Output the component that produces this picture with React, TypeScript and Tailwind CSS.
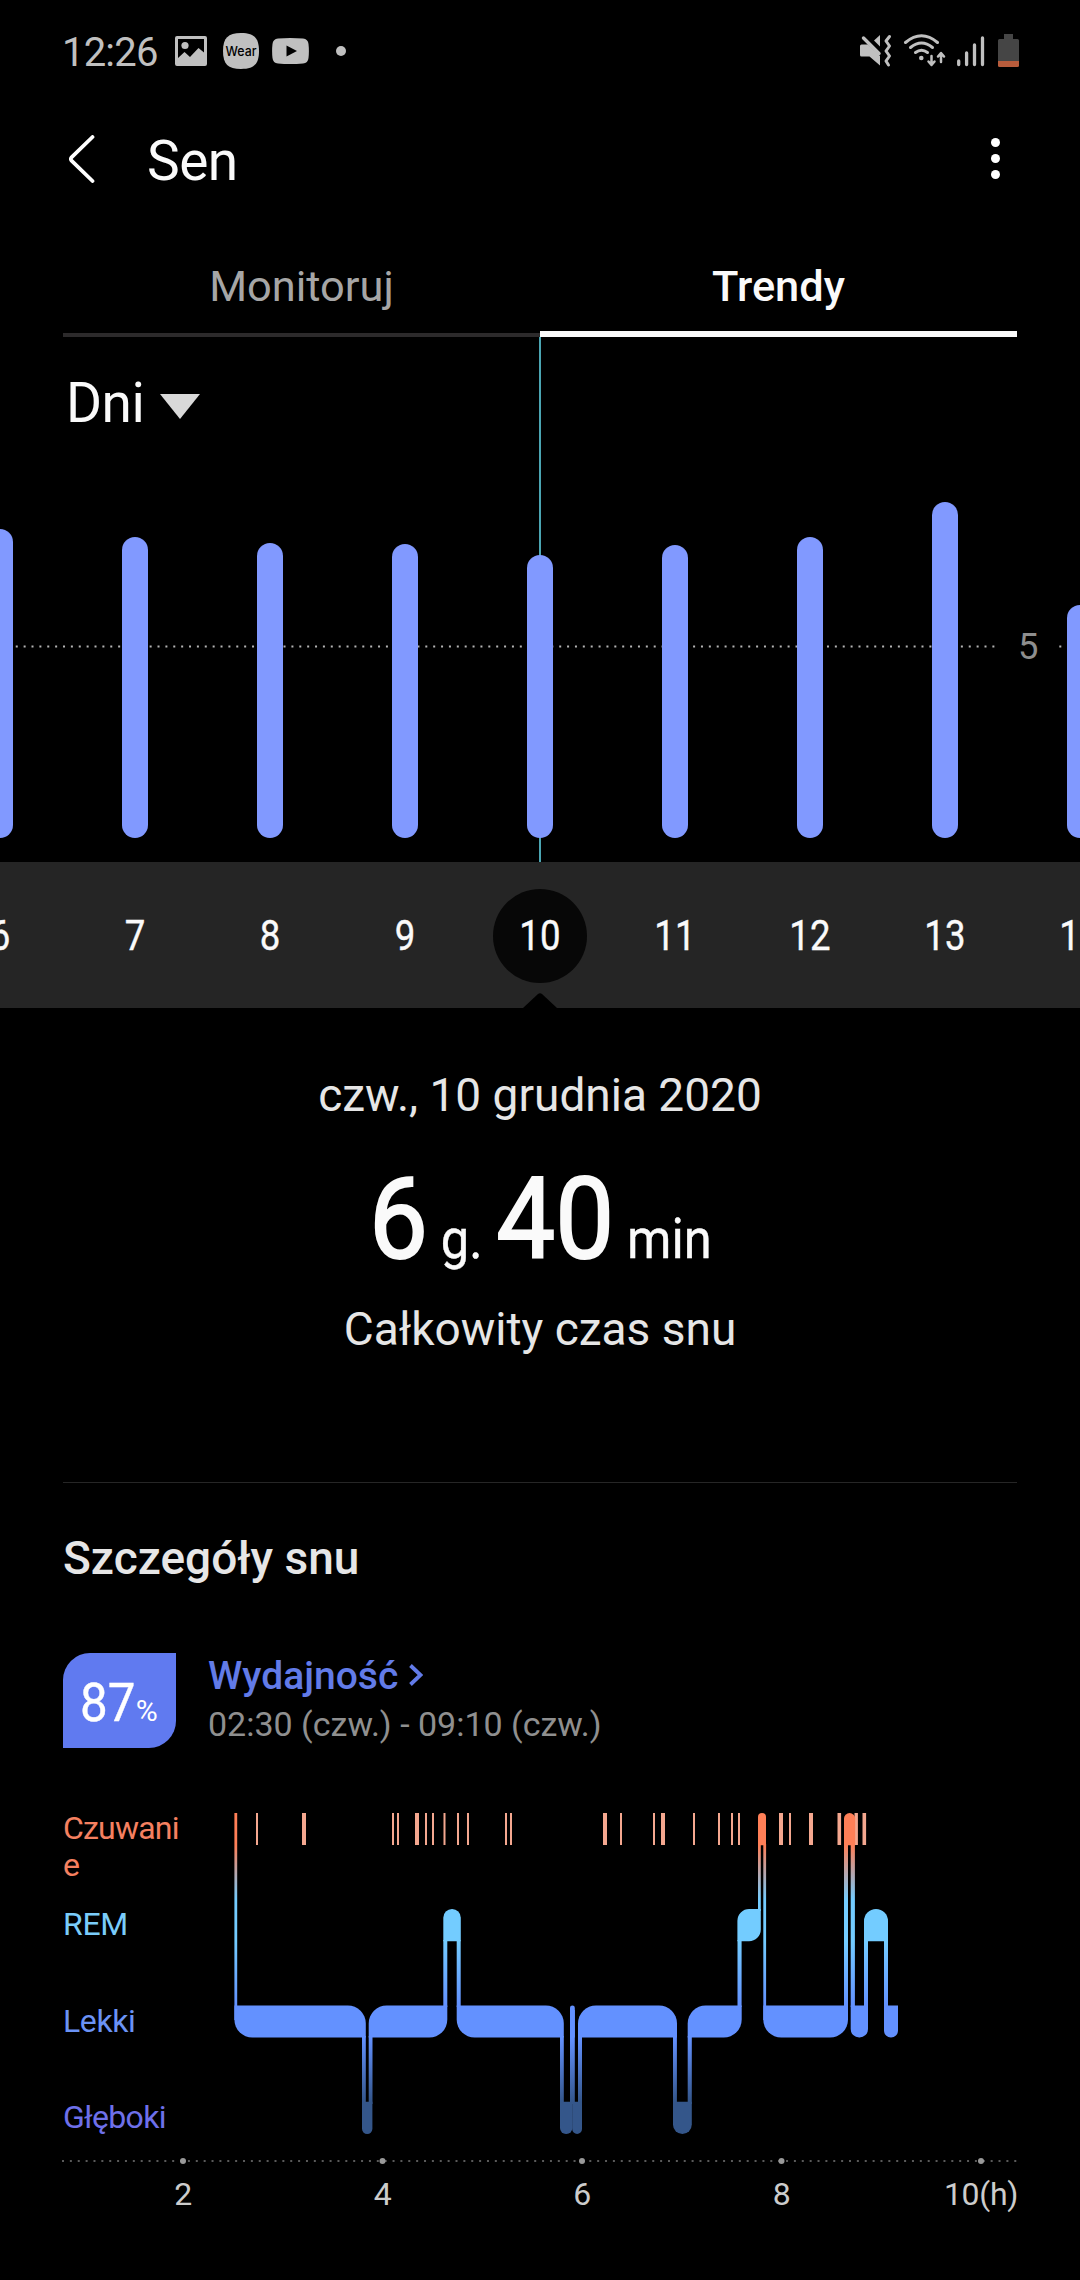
import React from "react";

const days = [
  { day: "6", height: 309 },
  { day: "7", height: 301 },
  { day: "8", height: 295.5 },
  { day: "9", height: 294 },
  { day: "10", height: 283.5 },
  { day: "11", height: 293 },
  { day: "12", height: 301 },
  { day: "13", height: 336 },
  { day: "14", height: 233 },
];

const stages = [
  { label: "Czuwanie", color: "text-[#f58060] tracking-[-0.8px]" },
  { label: "REM", color: "text-[#7accfa] tracking-[-0.3px]" },
  { label: "Lekki", color: "text-[#6b93f5] tracking-[-0.4px]" },
  { label: "Głęboki", color: "text-[#6e70ea] tracking-[-0.7px]" },
];

const hours = ["2", "4", "6", "8", "10(h)"];

// Short awakenings: [x, width]
const wakeTicks = [
  [256, 2], [302, 4], [392, 2], [397, 2], [415, 4], [425, 2], [432, 2], [443.5, 2], [457, 2], [467, 2],
  [505, 2], [510, 2], [603, 4], [620, 2], [653, 2], [661, 4], [693, 2], [718, 2], [731, 2], [738, 2],
  [779, 4], [789, 2], [809, 4], [837.5, 3.6], [854.5, 3.4], [862.5, 3.6],
];

// Thin vertical links between stages: [x, width, top, bottom]
const links = [
  [234.4, 2.8, 1813, 2020], [362, 3.8, 2036, 2104], [368.7, 3.8, 2036, 2104],
  [443.3, 4, 1940, 2007], [456.7, 4, 1940, 2007], [560, 3.8, 2036, 2104],
  [570, 4.8, 2010, 2104], [578, 4, 2036, 2104], [673, 3.9, 2036, 2104], [687.7, 4.1, 2036, 2104],
  [737.5, 4.1, 1940, 2007], [758, 2.8, 1844, 1911], [763.3, 2.8, 1844, 2020],
  [844, 4, 1844, 2007], [850.7, 4.2, 1844, 2007], [864, 4, 1940, 2007], [884, 4, 1940, 2007],
];

// Rounded blocks: [left, right, top, radii tl, tr, br, bl]
const blocks = [
  [234.4, 365.8, 2005.4, 0, 18, 0, 18],
  [368.7, 447.3, 2005.4, 18, 0, 18, 0],
  [456.7, 563.8, 2005.4, 0, 18, 0, 18],
  [570, 574.8, 2005.4, 2.4, 2.4, 0, 0],
  [578, 677, 2005.4, 18, 18, 0, 0],
  [687.7, 741.7, 2005.4, 18, 0, 18, 0],
  [763.3, 848, 2005.4, 0, 0, 18, 18],
  [850.7, 868, 2005.4, 0, 0, 8.5, 8.5],
  [884, 898, 2005.4, 0, 0, 7, 7],
  [443.3, 460.8, 1909, 8.7, 8.7, 0, 0],
  [737.4, 760.8, 1909, 11.8, 0, 11.8, 0],
  [864, 888, 1909, 12, 12, 0, 0],
  [758, 766, 1813, 4, 4, 0, 0],
  [844, 855.2, 1813, 5.6, 5.6, 0, 0],
  [362, 372.4, 2101.8, 0, 0, 5.2, 5.2],
  [560, 572.4, 2101.8, 0, 0, 6, 6],
  [572.2, 582, 2101.8, 0, 0, 5, 5],
  [673, 691.8, 2101.8, 0, 0, 9.4, 9.4],
];

function blockPath([l, r, t, tl, tr, br, bl]: number[]) {
  const b = t + 32.2;
  return `M${l + tl} ${t}H${r - tr}A${tr} ${tr} 0 0 1 ${r} ${t + tr}V${b - br}A${br} ${br} 0 0 1 ${r - br} ${b}H${l + bl}A${bl} ${bl} 0 0 1 ${l} ${b - bl}V${t + tl}A${tl} ${tl} 0 0 1 ${l + tl} ${t}Z`;
}

function StatusBar() {
  return (
    <div className="flex h-[102px] items-center justify-between pr-[60px] pl-[62px] text-[#c0c0c0]">
      <div className="flex items-center">
        <span className="w-[113px] pt-[4px] text-[40px] leading-[48px] tracking-[-0.8px]">12:26</span>
        <svg className="h-[30px] w-[32px]" viewBox="0 0 32 30" fill="currentColor">
          <path fillRule="evenodd" d="M2 0H30Q32 0 32 2V28Q32 30 30 30H2Q0 30 0 28V2Q0 0 2 0ZM3 3V22L9.500 16L15 21L23.500 12L29 16.500V3Z" />
          <circle cx="10" cy="9.500" r="3.600" />
        </svg>
        <svg className="ml-[16px] h-[36px] w-[36px]" viewBox="0 0 36 36">
          <path d="M18 0C31 0 36 5 36 18S31 36 18 36S0 31 0 18S5 0 18 0Z" fill="#c0c0c0" />
          <text x="18" y="22.500" textAnchor="middle" textLength="31" lengthAdjust="spacingAndGlyphs" className="font-['Inter',sans-serif] text-[13px] font-medium" fill="#000">Wear</text>
        </svg>
        <svg className="ml-[13px] h-[26px] w-[37px]" viewBox="0 0 37 26">
          <path d="M6 .5Q18 -.5 31 .5Q36 1 36.500 6Q37.300 13 36.500 20Q36 25 31 25.500Q18 26.500 6 25.500Q1 25 .5 20Q-.3 13 .5 6Q1 1 6 .5Z" fill="#c0c0c0" />
          <path d="M14.500 7.500V18.500L25 13Z" fill="#000" />
        </svg>
        <span className="ml-[27px] size-[10px] rounded-full bg-[#c0c0c0]" />
      </div>
      <svg className="h-[34px] w-[160px]" viewBox="860 34 160 34" fill="none">
        <path d="M861.500 44.500H868L880 56V65.500L869.500 56.500H861.500Q860 56.500 860 55V46Q860 44.500 861.500 44.500Z" fill="currentColor" />
        <path d="M880 35V46.500L874 40.500Z" fill="currentColor" />
        <path d="M863.500 38L879 53.500" stroke="currentColor" strokeWidth="3.400" strokeLinecap="round" />
        <path d="M889.500 36.500L886 41L889.500 46L886 51L889.500 56L886 61L888.500 65" stroke="currentColor" strokeWidth="3" strokeLinecap="round" strokeLinejoin="round" />
        <g stroke="currentColor" strokeWidth="3" strokeLinecap="round">
          <path d="M905.500 42.500Q921.500 29 937.500 42.500" />
          <path d="M910.500 47.500Q921.500 38.500 932.500 47.500" />
          <path d="M915.500 52.500Q921.500 48 927.500 52.500" />
        </g>
        <circle cx="921.300" cy="58" r="2.300" fill="currentColor" />
        <path d="M931.500 56V64M928.500 61.500L931.500 65L934.500 61.500M941 62V54M938 56.500L941 53L944 56.500" stroke="currentColor" strokeWidth="2.500" strokeLinecap="round" strokeLinejoin="round" />
        <path d="M958.700 61V64.500M966.600 53V64.500M974.500 45V64.500M982.500 38V64.500" stroke="currentColor" strokeWidth="3.300" strokeLinecap="round" />
        <path d="M1004 34H1013V39H1017.500Q1019 39 1019 40.500V61H998V40.500Q998 39 999.500 39H1004Z" fill="#454545" />
        <path d="M998 61H1019V65.500Q1019 67 1017.500 67H999.500Q998 67 998 65.500Z" fill="#b85c3c" />
      </svg>
    </div>
  );
}

function Header() {
  return (
    <header className="flex h-[113px] items-center justify-between pr-[80px] pl-[69px]">
      <div className="flex items-center">
        <svg className="h-[48px] w-[27px]" viewBox="0 0 27 48" fill="none" stroke="#fff" strokeWidth="3.800" strokeLinecap="round" strokeLinejoin="round">
          <path d="M23.500 2L2.500 22.300Q1.200 24 2.500 25.700L23.500 46" />
        </svg>
        <h1 className="ml-[51px] pt-[5px] text-[55px] leading-[64px] tracking-[-0.5px] text-[#fafafa]">Sen</h1>
      </div>
      <div className="flex flex-col gap-[6.500px]">
        <span className="size-[9.500px] rounded-full bg-white" />
        <span className="size-[9.500px] rounded-full bg-white" />
        <span className="size-[9.500px] rounded-full bg-white" />
      </div>
    </header>
  );
}

function TrendChart() {
  return (
    <section className="relative flex h-[525px] flex-col overflow-hidden">
      <div className="absolute top-0 left-[539px] h-full w-[2px] bg-[#4ba5b2]" />
      <div className="flex h-[132px] items-center pl-[66px]">
        <span className="text-[55px] leading-[64px] tracking-[-0.5px] text-[#fafafa]">Dni</span>
        <svg className="ml-[16px] mt-[7px] h-[25px] w-[40px]" viewBox="0 0 40 25">
          <path d="M0 0H40L20 25Z" fill="#d9d9d9" />
        </svg>
      </div>
      <div className="relative flex-1">
        <svg className="absolute top-[176px] left-0 h-[3px] w-full" viewBox="0 0 1080 3">
          <path d="M0 1.500H995M1059.300 1.500H1062" stroke="#b4b4b4" strokeWidth="2" strokeDasharray="2 5.876" />
        </svg>
        <span className="absolute top-[155px] left-[1018px] text-[37.500px] leading-[44px] text-[#8e8e8e]">
          <span className="inline-block origin-left scale-x-[0.97]">5</span>
        </span>
        <div className="relative -ml-[67.500px] flex h-full w-[1215px] items-end pb-[24px]">
          {days.map((d) => (
            <div key={d.day} className="flex w-[135px] justify-center">
              <div className="w-[26px] rounded-full bg-[#8199ff]" style={{ height: d.height }} />
            </div>
          ))}
        </div>
      </div>
    </section>
  );
}

function DayStrip() {
  return (
    <div className="relative h-[146px] overflow-hidden bg-[#252525]">
      <div className="-ml-[67.500px] flex h-full w-[1215px] items-center">
        {days.map((d) => (
          <div key={d.day} className="flex w-[135px] justify-center pt-px">
            <span className={`flex size-[94px] items-center justify-center rounded-full text-[42.500px] leading-[50px] text-[#fafafa] [-webkit-text-stroke:0.400px] ${d.day === "10" ? "bg-[#070707]" : ""}`}>
              <span className="scale-x-[0.86]">{d.day}</span>
            </span>
          </div>
        ))}
      </div>
      <svg className="absolute bottom-0 left-[523px] h-[15px] w-[34px]" viewBox="0 0 34 15">
        <path d="M0 15L15 1Q17 -.7 19 1L34 15Z" fill="#000" />
      </svg>
    </div>
  );
}

function Summary() {
  return (
    <section className="flex flex-col items-center pt-[57px]">
      <p className="text-[46px] leading-[60px] text-[#e6e6e6]">czw., 10 grudnia 2020</p>
      <p className="mt-[24px] flex h-[140px] scale-x-[0.92] items-baseline leading-[140px] whitespace-nowrap text-[#fafafa]">
        <span className="text-[114px] [-webkit-text-stroke:2px]">6</span>
        <span className="ml-[14px] text-[55px] [-webkit-text-stroke:0.400px]">g.</span>
        <span className="ml-[15px] text-[114px] [-webkit-text-stroke:2px]">40</span>
        <span className="ml-[14px] text-[55px] [-webkit-text-stroke:0.400px]">min</span>
      </p>
      <p className="mt-[10px] text-[46px] leading-[60px] text-[#e6e6e6]">Całkowity czas snu</p>
    </section>
  );
}

function SleepStages() {
  return (
    <div className="mt-[52px]">
      <div className="flex h-[350px] pl-[63px]">
        <div className="w-[120px] pt-[10px]">
          {stages.map((s) => (
            <div key={s.label} className={`h-[96.300px] text-[32px] leading-[37px] break-all ${s.color}`}>
              {s.label}
            </div>
          ))}
        </div>
        <svg className="h-[350px] w-[834px]" viewBox="183 1800 834 350">
          <defs>
            <linearGradient id="stage" gradientUnits="userSpaceOnUse" x1="0" y1="1813" x2="0" y2="2134">
              <stop offset="0" stopColor="#ff7f57" />
              <stop offset="0.1" stopColor="#ff7f57" />
              <stop offset="0.27" stopColor="#73ccff" />
              <stop offset="0.4" stopColor="#73ccff" />
              <stop offset="0.6" stopColor="#6391ff" />
              <stop offset="0.7" stopColor="#6391ff" />
              <stop offset="0.9" stopColor="#34568a" />
              <stop offset="1" stopColor="#34568a" />
            </linearGradient>
          </defs>
          {wakeTicks.map(([x, w]) => (
            <rect key={x} x={x} y="1813" width={w} height="32" fill="#f4a78f" />
          ))}
          <g fill="url(#stage)">
            {links.map(([x, w, t, b]) => (
              <rect key={x} x={x} y={t} width={w} height={b - t} />
            ))}
            {blocks.map((b) => (
              <path key={`${b[0]}-${b[2]}`} d={blockPath(b)} />
            ))}
          </g>
        </svg>
      </div>
      <svg className="block h-[24px] w-full" viewBox="0 0 1080 24">
        <path d="M62 11H1017" stroke="#5a5a5a" strokeWidth="2" strokeDasharray="2 5.870" />
        {[183, 382.500, 582, 781.500, 981].map((x) => (
          <circle key={x} cx={x} cy="11" r="3" fill="#999" />
        ))}
      </svg>
      <div className="flex pl-[83.250px] text-[32px] leading-[40px] tracking-[-0.300px] text-[#cccccc]">
        {hours.map((h) => (
          <span key={h} className="w-[199.500px] shrink-0 text-center">
            {h}
          </span>
        ))}
      </div>
    </div>
  );
}

export default function App() {
  return (
    <main className="h-[2280px] w-[1080px] overflow-hidden bg-black font-['Roboto',sans-serif]">
      <StatusBar />
      <Header />
      <nav className="mx-[63px] grid h-[122px] grid-cols-2 text-center text-[43.400px] leading-[60px]">
        <div className="border-b-4 border-[#2c2a2b] pt-[42px] text-[#a6a6a6]">Monitoruj</div>
        <div className="border-b-[6px] border-[#fafafa] pt-[42px] font-medium text-[#fafafa]">Trendy</div>
      </nav>
      <TrendChart />
      <DayStrip />
      <Summary />
      <section className="mt-[123px]">
        <div className="mx-[63px] h-px bg-[#262626]" />
        <h2 className="mt-[45px] ml-[63px] text-[46px] leading-[60px] font-medium text-[#e6e6e6]">Szczegóły snu</h2>
        <div className="mt-[65px] flex h-[95px] pl-[63px]">
          <div className="flex w-[113px] items-baseline justify-center rounded-tl-[27px] rounded-br-[27px] bg-[#607af0] pt-[18px] pr-[3px] leading-[64px] text-white">
            <span className="-mr-[2px] scale-x-[0.93] text-[53px] [-webkit-text-stroke:0.400px]">87</span>
            <span className="text-[30px]">%</span>
          </div>
          <div className="ml-[32px]">
            <div className="flex h-[46px] items-center text-[#627be8]">
              <span className="text-[39px] leading-[48px] font-medium">Wydajność</span>
              <svg className="mb-[2px] ml-[11px] h-[22px] w-[14px]" viewBox="0 0 14 22" fill="none" stroke="currentColor" strokeWidth="3.800">
                <path d="M1.500 1.500L11.500 11L1.500 20.500" />
              </svg>
            </div>
            <p className="mt-[2px] text-[34px] leading-[46px] text-[#8f8f8f]">02:30 (czw.) - 09:10 (czw.)</p>
          </div>
        </div>
      </section>
      <SleepStages />
    </main>
  );
}
